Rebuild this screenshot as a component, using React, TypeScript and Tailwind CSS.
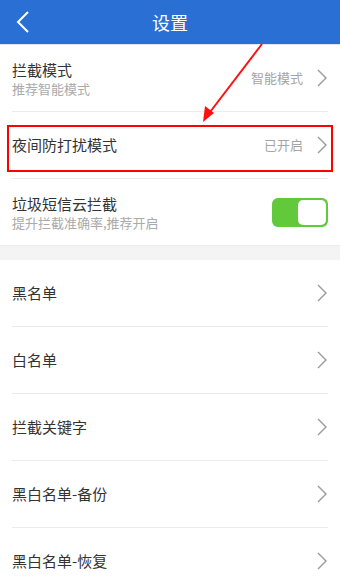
import React from 'react';

const font = { fontFamily: '"Noto Sans CJK SC", "Noto Sans", sans-serif' };

function Chevron() {
  return (
    <svg width="12" height="20" viewBox="0 0 12 20" className="shrink-0">
      <polyline points="2,2 10,10 2,18" fill="none" stroke="#9a9a9a" strokeWidth="1.4" />
    </svg>
  );
}

function Row({ title, sub, value, children }: { title: string; sub?: string; value?: string; children?: React.ReactNode }) {
  return (
    <div className="relative h-[66px] flex items-center pl-3 pr-3">
      <div className="flex-1 flex flex-col">
        <span className="text-[15px] leading-[20px] text-[#333333]">{title}</span>
        {sub && <span className="text-[13px] leading-[17px] text-[#aaaaaa]">{sub}</span>}
      </div>
      {value && <span className="text-[13px] text-[#a5a5a5] mr-[13px]">{value}</span>}
      {children ?? <Chevron />}
    </div>
  );
}

function Divider() {
  return <div className="mx-3 h-px bg-[#ececec]" />;
}

export default function App() {
  return (
    <div className="relative w-[340px] h-[584px] overflow-hidden bg-white" style={font}>
      {/* Header */}
      <div className="relative h-[45px] bg-[#2a6fd3] flex items-center justify-center border-b border-[#dfe6f0]">
        <svg width="16" height="24" viewBox="0 0 16 24" className="absolute left-[15px] top-[10px]">
          <polyline points="13,2 3,12 13,22" fill="none" stroke="white" strokeWidth="2" />
        </svg>
        <span className="text-[18px] text-white">设置</span>
      </div>

      <Row title="拦截模式" sub="推荐智能模式" value="智能模式" />
      <Divider />
      <div className="relative">
        <Row title="夜间防打扰模式" value="已开启" />
        <div className="absolute left-[7px] right-[7px] top-[13px] h-[47px] border-2 border-[#ff0000]" />
      </div>
      <Divider />
      <Row title="垃圾短信云拦截" sub="提升拦截准确率,推荐开启">
        <div className="w-[56px] h-[29px] rounded-[6px] bg-[#62c93a] flex items-center justify-end pr-[2px]">
          <div className="w-[28px] h-[25px] rounded-[5px] bg-white" />
        </div>
      </Row>

      <div className="h-[15px] bg-[#f4f4f4] border-t border-[#ededed]" />

      <Row title="黑名单" />
      <Divider />
      <Row title="白名单" />
      <Divider />
      <Row title="拦截关键字" />
      <Divider />
      <Row title="黑白名单-备份" />
      <Divider />
      <Row title="黑白名单-恢复" />

      {/* annotation arrow */}
      <svg width="340" height="130" viewBox="0 0 340 130" className="absolute left-0 top-0 pointer-events-none">
        <line x1="262" y1="44" x2="207" y2="116" stroke="#ff1010" strokeWidth="2" />
        <polygon points="203,122 205,106 214,113" fill="#ff1010" />
      </svg>
    </div>
  );
}
